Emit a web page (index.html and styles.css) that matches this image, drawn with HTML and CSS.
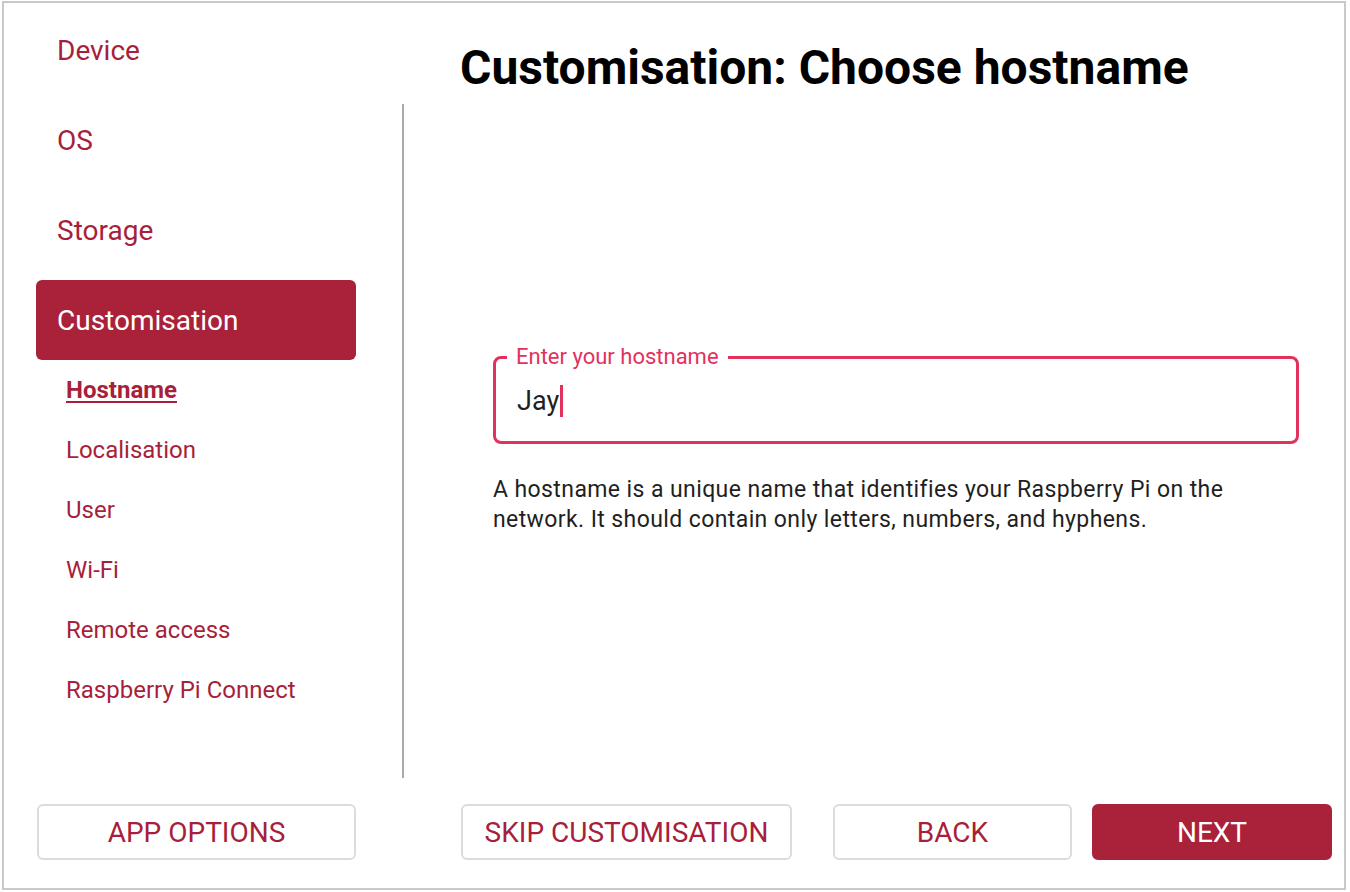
FILE: index.html
```html
<!DOCTYPE html>
<html lang="en">
<head>
<meta charset="utf-8">
<title>Customisation: Choose hostname</title>
<link rel="stylesheet" href="styles.css">
</head>
<body>
<div class="window">
  <nav class="sidebar">
    <div class="nav-item">Device</div>
    <div class="nav-item">OS</div>
    <div class="nav-item">Storage</div>
    <div class="nav-item active">Customisation</div>
    <div class="sub-list">
      <div class="sub-item current">Hostname</div>
      <div class="sub-item">Localisation</div>
      <div class="sub-item">User</div>
      <div class="sub-item">Wi-Fi</div>
      <div class="sub-item">Remote access</div>
      <div class="sub-item">Raspberry Pi Connect</div>
    </div>
  </nav>
  <div class="divider"></div>
  <h1 class="title">Customisation: Choose hostname</h1>
  <section class="content">
    <fieldset class="field">
      <legend class="field-label">Enter your hostname</legend>
      <div class="field-value">Jay<span class="caret"></span></div>
    </fieldset>
    <p class="help">A hostname is a unique name that identifies your Raspberry Pi on the network. It should contain only letters, numbers, and hyphens.</p>
  </section>
  <div class="side-footer">
    <button class="btn btn-app">APP OPTIONS</button>
  </div>
  <div class="main-footer">
    <button class="btn btn-skip">SKIP CUSTOMISATION</button>
    <button class="btn btn-back">BACK</button>
    <button class="btn btn-primary btn-next">NEXT</button>
  </div>
</div>
</body>
</html>
```

FILE: styles.css
```css
html, body {
  margin: 0;
  padding: 0;
  background: #ffffff;
}

body {
  font-family: Roboto, "Liberation Sans", sans-serif;
  color: #1f1f1f;
}

.window {
  box-sizing: border-box;
  margin: 1px 0 0 2px;
  width: 1344px;
  height: 889px;
  border: 2px solid #c9c9c9;
  display: grid;
  grid-template-columns: 398px 2px 1fr;
  grid-template-rows: 101px 674px 1fr;
}

/* Sidebar */
.sidebar {
  grid-column: 1;
  grid-row: 1 / 3;
  padding: 7px 0 0 32px;
  display: flex;
  flex-direction: column;
}

.nav-item {
  box-sizing: border-box;
  width: 320px;
  height: 80px;
  margin-bottom: 10px;
  padding-left: 21px;
  display: flex;
  align-items: center;
  font-size: 28px;
  color: #a71f3a;
  border-radius: 6px;
}

.nav-item.active {
  background: #aa2239;
  color: #ffffff;
  margin-bottom: 0;
}

.sub-list {
  display: flex;
  flex-direction: column;
  padding-left: 30px;
}

.sub-item {
  height: 60px;
  display: flex;
  align-items: center;
  font-size: 24px;
  color: #a71f3a;
}

.sub-item.current {
  font-weight: 700;
  text-decoration: underline;
  text-underline-offset: 3px;
  text-decoration-thickness: 2px;
}

.divider {
  grid-column: 2;
  grid-row: 2;
  background: #a9a9a9;
}

/* Main */
.title {
  grid-column: 3;
  grid-row: 1;
  margin: 0;
  padding: 37px 0 0 56px;
  font-size: 48px;
  line-height: 56px;
  font-weight: 700;
  color: #000000;
}

.content {
  grid-column: 3;
  grid-row: 2;
  padding: 241px 45px 0 89px;
}

.field {
  margin: 0;
  padding: 0 21px;
  height: 99px;
  box-sizing: border-box;
  border: 3px solid #e3315d;
  border-radius: 8px;
  display: flex;
  align-items: center;
}

.field-label {
  margin-left: -10px;
  padding: 0 9px;
  font-size: 22px;
  line-height: 24px;
  color: #e3315d;
}

.field-value {
  display: flex;
  align-items: center;
  font-size: 27px;
  color: #1f1f1f;
  margin-top: -9px;
}

.caret {
  display: inline-block;
  width: 3px;
  height: 32px;
  margin-left: 1px;
  background: #e3315d;
}

.help {
  margin: 31px 0 0 0;
  font-size: 23px;
  letter-spacing: 0.4px;
  line-height: 30px;
  color: #1f1f1f;
}

/* Footers */
.side-footer {
  grid-column: 1;
  grid-row: 3;
  padding: 26px 0 0 33px;
}

.main-footer {
  grid-column: 3;
  grid-row: 3;
  padding: 26px 0 0 57px;
  display: flex;
  align-items: flex-start;
}

.btn {
  box-sizing: border-box;
  height: 56px;
  border: 2px solid #dcdcdc;
  border-radius: 6px;
  background: #ffffff;
  color: #a71f3a;
  font-family: Roboto, "Liberation Sans", sans-serif;
  font-size: 28px;
  padding: 0;
  display: flex;
  align-items: center;
  justify-content: center;
}

.btn-app {
  width: 319px;
}

.btn-skip {
  width: 331px;
}

.btn-back {
  width: 239px;
  margin-left: 41px;
}

.btn-next {
  width: 240px;
  margin-left: 20px;
}

.btn-primary {
  background: #aa2239;
  border-color: #aa2239;
  color: #ffffff;
}
```
